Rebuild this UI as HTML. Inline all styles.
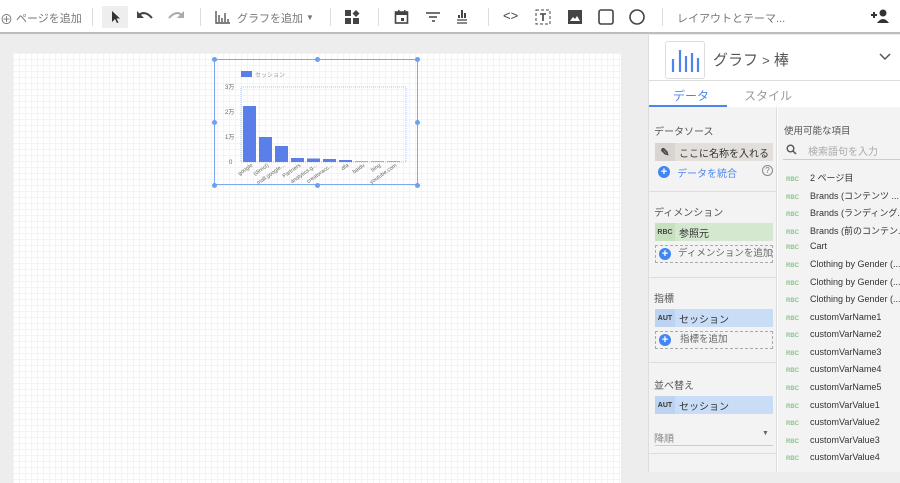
<!DOCTYPE html>
<html><head><meta charset="utf-8"><style>
*{box-sizing:border-box;margin:0;padding:0}
body{width:900px;height:472px;overflow:hidden;background:#ededed;font-family:"Liberation Sans","Noto Sans CJK JP",sans-serif;position:relative;color:#333}
.tb{position:absolute;left:0;top:0;width:900px;height:34px;background:#fff;border-bottom:2px solid #bdbdbd;font-size:11px;color:#777}
.tb .a{position:absolute;top:10px;white-space:nowrap}
.sep{position:absolute;top:8px;width:1px;height:18px;background:#ddd}
.page{position:absolute;left:13px;top:53px;width:608px;height:430px;background-color:#fff;background-image:linear-gradient(#f3f3f3 1px,transparent 1px),linear-gradient(90deg,#f3f3f3 1px,transparent 1px);background-size:6px 6px}
.panel{position:absolute;left:648px;top:35px;width:252px;height:437px;background:#fff;border-left:1px solid #ddd}
.lc{position:absolute;left:0;top:72px;width:128px;height:365px;background:#f3f3f3;border-right:1px solid #ddd}
.rc{position:absolute;left:129px;top:72px;width:123px;height:365px;background:#f3f3f3;overflow:hidden}
.sec{position:absolute;left:0;width:128px;border-top:1px solid #ddd;font-size:10px;color:#555}
.chip{position:absolute;left:6px;width:118px;height:18px;font-size:10px;display:flex;align-items:center;white-space:nowrap}
.tag{display:flex;align-items:center;justify-content:center;width:20px;height:18px;font-size:7px;font-weight:bold;margin-right:4px}
.add{position:absolute;left:6px;width:118px;height:18px;border:1px dashed #aaa;font-size:9.5px;line-height:16px;color:#666;white-space:nowrap;overflow:hidden}
.pl{position:absolute;left:3px;width:12px;height:12px;border-radius:50%;background:#4285f4;color:#fff;font-size:11px;line-height:12px;text-align:center;font-weight:bold}
.it{position:absolute;left:8px;font-size:9px;color:#333;white-space:nowrap}
.it b{font-size:6px;color:#8bc58b;margin-right:12px;display:inline-block;width:12px}
</style></head><body>
<div class="tb">
 <span class="a" style="left:0;top:9px;font-size:13px">⊕</span><span class="a" style="left:16px">ページを追加</span>
 <div class="sep" style="left:92px"></div>
 <div style="position:absolute;left:102px;top:6px;width:26px;height:22px;background:#eee"></div>
 <svg style="position:absolute;left:108px;top:10px" width="14" height="14"><path d="M4 1 L4 12 L7 9 L9 13 L10.5 12.5 L8.5 8.5 L12 8.5 Z" fill="#333"/></svg>
 <svg style="position:absolute;left:135px;top:9px" width="20" height="16"><path d="M4 6 Q10 1 17 9" stroke="#444" stroke-width="2" fill="none"/><path d="M2 2 L2 9 L9 9 Z" fill="#444"/></svg>
 <svg style="position:absolute;left:166px;top:9px" width="20" height="16"><path d="M16 6 Q10 1 3 9" stroke="#aaa" stroke-width="2" fill="none"/><path d="M18 2 L18 9 L11 9 Z" fill="#aaa"/></svg>
 <div class="sep" style="left:200px"></div>
 <svg style="position:absolute;left:215px;top:10px" width="16" height="14"><path d="M1 1V13H15M4 5V12M7 8V12M10 3V12M13 9V12" stroke="#555" stroke-width="1.4" fill="none"/></svg>
 <span class="a" style="left:237px">グラフを追加</span><span class="a" style="left:306px;font-size:8px;top:13px">▼</span>
 <div class="sep" style="left:330px"></div>
 <svg style="position:absolute;left:345px;top:10px" width="16" height="16"><rect x="0" y="0" width="6" height="6" fill="#444"/><rect x="0" y="8" width="6" height="6" fill="#444"/><rect x="8" y="8" width="6" height="6" fill="#444"/><path d="M11 0 L14.5 3.5 L11 7 L7.5 3.5Z" fill="#444"/></svg>
 <div class="sep" style="left:378px"></div>
 <svg style="position:absolute;left:394px;top:9px" width="16" height="16"><rect x="1.5" y="3" width="12" height="11" stroke="#444" stroke-width="1.6" fill="none"/><rect x="1.5" y="3" width="12" height="3" fill="#444"/><rect x="4" y="1" width="1.5" height="3" fill="#444"/><rect x="10" y="1" width="1.5" height="3" fill="#444"/><rect x="7" y="9" width="3" height="3" fill="#444"/></svg>
 <svg style="position:absolute;left:425px;top:11px" width="16" height="12"><path d="M1 2H15M4 6H12M7 10H10" stroke="#444" stroke-width="1.6"/></svg>
 <svg style="position:absolute;left:455px;top:9px" width="14" height="16"><path d="M7 1V9M10 4V9M4 6V9" stroke="#444" stroke-width="2"/><path d="M2 11H12M2 14H12" stroke="#444" stroke-width="1.2"/></svg>
 <div class="sep" style="left:488px"></div>
 <span class="a" style="left:503px;color:#444;font-size:13px;top:8px">&lt;&gt;</span>
 <svg style="position:absolute;left:535px;top:9px" width="16" height="16"><rect x="1" y="1" width="14" height="14" stroke="#444" fill="none" stroke-dasharray="3 2"/><path d="M5 5H11M8 5V12" stroke="#444" stroke-width="1.6"/></svg>
 <svg style="position:absolute;left:567px;top:9px" width="16" height="16"><rect x="1" y="1" width="14" height="14" fill="#444"/><path d="M3 12L6 8L8 10L10 7L13 12Z" fill="#fff"/></svg>
 <svg style="position:absolute;left:598px;top:9px" width="17" height="17"><rect x="1" y="1" width="14" height="14" rx="2" stroke="#444" stroke-width="1.6" fill="none"/></svg>
 <svg style="position:absolute;left:629px;top:9px" width="17" height="17"><circle cx="8" cy="8" r="7" stroke="#444" stroke-width="1.6" fill="none"/></svg>
 <div class="sep" style="left:662px"></div>
 <span class="a" style="left:677px">レイアウトとテーマ...</span>
 <svg style="position:absolute;left:870px;top:8px" width="22" height="16"><path d="M1 7H7M4 4V10" stroke="#333" stroke-width="2"/><circle cx="13" cy="5" r="3.5" fill="#333"/><path d="M7 15Q13 7 19 15Z" fill="#333"/></svg>
</div>
<div class="page">
 <div style="position:absolute;left:201px;top:6px;width:204px;height:126px;border:1.5px solid #7aaaf0"></div>
 <div style="position:absolute;left:199px;top:4px;width:5px;height:5px;border-radius:50%;background:#6fa0ee"></div>
 <div style="position:absolute;left:302px;top:4px;width:5px;height:5px;border-radius:50%;background:#6fa0ee"></div>
 <div style="position:absolute;left:402px;top:4px;width:5px;height:5px;border-radius:50%;background:#6fa0ee"></div>
 <div style="position:absolute;left:199px;top:67px;width:5px;height:5px;border-radius:50%;background:#6fa0ee"></div>
 <div style="position:absolute;left:402px;top:67px;width:5px;height:5px;border-radius:50%;background:#6fa0ee"></div>
 <div style="position:absolute;left:199px;top:130px;width:5px;height:5px;border-radius:50%;background:#6fa0ee"></div>
 <div style="position:absolute;left:302px;top:130px;width:5px;height:5px;border-radius:50%;background:#6fa0ee"></div>
 <div style="position:absolute;left:402px;top:130px;width:5px;height:5px;border-radius:50%;background:#6fa0ee"></div>
 <svg style="position:absolute;left:200px;top:5px" width="210" height="130" font-family="Liberation Sans,Noto Sans CJK JP,sans-serif">
  <rect x="28" y="13" width="11" height="6" fill="#5b7fe8"/><text x="42" y="19" font-size="6" fill="#999">セッション</text>
  <rect x="28" y="29" width="165" height="75" fill="none" stroke="#aac4f5" stroke-dasharray="1 1"/>
  <g font-size="6" fill="#666"><text x="12" y="31">3万</text><text x="12" y="56">2万</text><text x="12" y="81">1万</text><text x="16" y="106">0</text></g>
  <g fill="#5b7fe8"><rect x="30" y="48" width="13" height="56"/><rect x="46" y="79" width="13" height="25"/><rect x="62" y="88" width="13" height="16"/><rect x="78" y="100" width="13" height="4"/><rect x="94" y="100.5" width="13" height="3.5"/><rect x="110" y="101" width="13" height="3"/><rect x="126" y="102" width="13" height="2"/><rect x="142" y="103.4" width="13" height=".6"/><rect x="158" y="103.4" width="13" height=".6"/><rect x="174" y="103.4" width="13" height=".6"/></g>
  <g font-size="5.5" fill="#666">
   <text transform="translate(40,108) rotate(-35)" text-anchor="end">google</text>
   <text transform="translate(56,108) rotate(-35)" text-anchor="end">(direct)</text>
   <text transform="translate(72,108) rotate(-35)" text-anchor="end">mall.google...</text>
   <text transform="translate(88,108) rotate(-35)" text-anchor="end">Partners</text>
   <text transform="translate(104,108) rotate(-35)" text-anchor="end">analytics.g...</text>
   <text transform="translate(120,108) rotate(-35)" text-anchor="end">creatoracc...</text>
   <text transform="translate(136,108) rotate(-35)" text-anchor="end">dfa</text>
   <text transform="translate(152,108) rotate(-35)" text-anchor="end">baidu</text>
   <text transform="translate(168,108) rotate(-35)" text-anchor="end">bing</text>
   <text transform="translate(184,108) rotate(-35)" text-anchor="end">youtube.com</text>
  </g>
 </svg>
</div>
<div class="panel">
 <div style="position:absolute;left:16px;top:6px;width:40px;height:38px;border:1px solid #ddd;border-radius:3px"></div>
 <svg style="position:absolute;left:20px;top:12px" width="32" height="26"><path d="M4 12V25M11 3V25M17 9V25M23 6V25M29 11V25" stroke="#4f84ef" stroke-width="2.2"/></svg>
 <div style="position:absolute;left:64px;top:14px;font-size:15px;color:#555">グラフ <span style="font-size:13px">&gt;</span> 棒</div>
 <svg style="position:absolute;left:230px;top:18px" width="12" height="8"><path d="M1 1L6 6L11 1" stroke="#555" stroke-width="1.5" fill="none"/></svg>
 <div style="position:absolute;left:0;top:45px;width:252px;border-top:1px solid #ddd"></div>
 <div style="position:absolute;left:24px;top:52px;font-size:12px;color:#4f84ef">データ</div>
 <div style="position:absolute;left:95px;top:52px;font-size:12px;color:#999">スタイル</div>
 <div style="position:absolute;left:0;top:70px;width:78px;height:2px;background:#4f84ef"></div>
 <div class="lc">
  <div style="position:absolute;left:5px;top:16px;font-size:10px;color:#555">データソース</div>
  <div class="chip" style="top:36px;background:#e3e0dc"><span class="tag" style="background:#d8d5d1;font-size:11px;color:#444">✎</span>ここに名称を入れる</div>
  <div class="pl" style="left:9px;top:59px">+</div>
  <div style="position:absolute;left:28px;top:58px;font-size:10px;color:#4f84ef">データを統合</div>
  <div style="position:absolute;left:113px;top:58px;width:11px;height:11px;border:1px solid #888;border-radius:50%;font-size:8px;text-align:center;line-height:10px;color:#777">?</div>
  <div class="sec" style="top:84px"></div>
  <div style="position:absolute;left:5px;top:97px;font-size:10px;color:#555">ディメンション</div>
  <div class="chip" style="top:116px;background:#d4e8cf"><span class="tag" style="background:#c6e0c0;color:#444">RBC</span>参照元</div>
  <div class="add" style="top:138px"><span class="pl" style="top:2px">+</span><span style="margin-left:22px">ディメンションを追加</span></div>
  <div class="sec" style="top:170px"></div>
  <div style="position:absolute;left:5px;top:183px;font-size:10px;color:#555">指標</div>
  <div class="chip" style="top:202px;background:#c9ddf7"><span class="tag" style="background:#bcd3f2;color:#333">AUT</span>セッション</div>
  <div class="add" style="top:224px"><span class="pl" style="top:2px">+</span><span style="margin-left:24px">指標を追加</span></div>
  <div class="sec" style="top:255px"></div>
  <div style="position:absolute;left:5px;top:270px;font-size:10px;color:#555">並べ替え</div>
  <div class="chip" style="top:289px;background:#c9ddf7"><span class="tag" style="background:#bcd3f2;color:#333">AUT</span>セッション</div>
  <div style="position:absolute;left:5px;top:323px;font-size:10px;color:#888">降順</div>
  <div style="position:absolute;left:113px;top:323px;font-size:7px;color:#666">▼</div>
  <div style="position:absolute;left:6px;top:338px;width:118px;border-top:1px solid #ccc"></div>
  <div class="sec" style="top:346px"></div>
 </div>
 <div class="rc">
  <div style="position:absolute;left:6px;top:16px;font-size:9.5px;color:#555">使用可能な項目</div>
  <svg style="position:absolute;left:8px;top:37px" width="11" height="11"><circle cx="4.5" cy="4.5" r="3.3" stroke="#555" stroke-width="1.4" fill="none"/><path d="M7 7L10 10" stroke="#555" stroke-width="1.5"/></svg>
  <div style="position:absolute;left:30px;top:36px;font-size:10px;color:#aaa">検索語句を入力</div>
  <div style="position:absolute;left:5px;top:52px;width:118px;border-top:1px solid #ccc"></div>
  <div class="it" style="top:64px"><b>RBC</b>2 ページ目</div>
  <div class="it" style="top:82px"><b>RBC</b>Brands (コンテンツ ...</div>
  <div class="it" style="top:99px"><b>RBC</b>Brands (ランディング...</div>
  <div class="it" style="top:117px"><b>RBC</b>Brands (前のコンテン...</div>
  <div class="it" style="top:134px"><b>RBC</b>Cart</div>
  <div class="it" style="top:152px"><b>RBC</b>Clothing by Gender (...</div>
  <div class="it" style="top:170px"><b>RBC</b>Clothing by Gender (...</div>
  <div class="it" style="top:187px"><b>RBC</b>Clothing by Gender (...</div>
  <div class="it" style="top:205px"><b>RBC</b>customVarName1</div>
  <div class="it" style="top:222px"><b>RBC</b>customVarName2</div>
  <div class="it" style="top:240px"><b>RBC</b>customVarName3</div>
  <div class="it" style="top:257px"><b>RBC</b>customVarName4</div>
  <div class="it" style="top:275px"><b>RBC</b>customVarName5</div>
  <div class="it" style="top:293px"><b>RBC</b>customVarValue1</div>
  <div class="it" style="top:310px"><b>RBC</b>customVarValue2</div>
  <div class="it" style="top:328px"><b>RBC</b>customVarValue3</div>
  <div class="it" style="top:345px"><b>RBC</b>customVarValue4</div>
 </div>
</div>
</body></html>
